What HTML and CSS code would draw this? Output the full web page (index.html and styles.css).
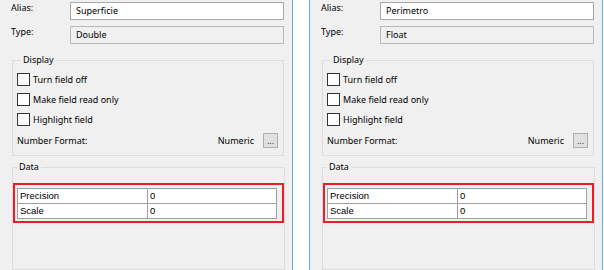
FILE: index.html
```html
<!DOCTYPE html>
<html lang="en">
<head>
  <meta charset="UTF-8">
  <meta name="viewport" content="width=device-width, initial-scale=1.0">
  <title>Field Properties</title>
  <link rel="stylesheet" href="styles.css">
</head>
<body>
  <div class="panels">
    <div class="panel">
      <div class="field-row">
        <span class="field-label">Alias:</span>
        <div class="field-input">Superficie</div>
      </div>
      <div class="field-row">
        <span class="field-label">Type:</span>
        <div class="field-input readonly">Double</div>
      </div>
      <fieldset class="group display-group">
        <legend>Display</legend>
        <label class="check-row"><span class="check-box"></span>Turn field off</label>
        <label class="check-row"><span class="check-box"></span>Make field read only</label>
        <label class="check-row"><span class="check-box"></span>Highlight field</label>
        <div class="format-row">
          <span class="format-label">Number Format:</span>
          <span class="format-value">Numeric</span>
          <button class="dots-btn">...</button>
        </div>
      </fieldset>
      <fieldset class="group data-group">
        <legend>Data</legend>
        <div class="highlight">
          <table class="data-table">
            <tr><td class="key">Precision</td><td>0</td></tr>
            <tr><td class="key">Scale</td><td>0</td></tr>
          </table>
        </div>
      </fieldset>
    </div>

    <div class="panel">
      <div class="field-row">
        <span class="field-label">Alias:</span>
        <div class="field-input">Perimetro</div>
      </div>
      <div class="field-row">
        <span class="field-label">Type:</span>
        <div class="field-input readonly">Float</div>
      </div>
      <fieldset class="group display-group">
        <legend>Display</legend>
        <label class="check-row"><span class="check-box"></span>Turn field off</label>
        <label class="check-row"><span class="check-box"></span>Make field read only</label>
        <label class="check-row"><span class="check-box"></span>Highlight field</label>
        <div class="format-row">
          <span class="format-label">Number Format:</span>
          <span class="format-value">Numeric</span>
          <button class="dots-btn">...</button>
        </div>
      </fieldset>
      <fieldset class="group data-group">
        <legend>Data</legend>
        <div class="highlight">
          <table class="data-table">
            <tr><td class="key">Precision</td><td>0</td></tr>
            <tr><td class="key">Scale</td><td>0</td></tr>
          </table>
        </div>
      </fieldset>
    </div>
  </div>
</body>
</html>
```

FILE: styles.css
```css
/* General */
body {
  margin: 0;
  background: #ffffff;
  font-family: "Noto Sans", "Liberation Sans", sans-serif;
  font-size: 9px;
  color: #000;
  overflow: hidden;
}

.panels {
  display: flex;
  gap: 16px;
  margin-left: -1px;
  height: 270px;
}

/* Window panel */
.panel {
  box-sizing: border-box;
  width: 294px;
  height: 270px;
  background: #f0f0f0;
  border-left: 1px solid #5eade9;
  border-right: 1px solid #5eade9;
  padding: 2px 8px 0 11px;
  display: flex;
  flex-direction: column;
  overflow: hidden;
}

/* Alias / Type rows */
.field-row {
  display: grid;
  grid-template-columns: 59px 1fr;
  height: 18px;
  margin-bottom: 6px;
}

.field-label {
  line-height: 12px;
}

.field-input {
  box-sizing: border-box;
  height: 18px;
  border: 1px solid #a9a9a9;
  background: #fff;
  padding-left: 5px;
  line-height: 16px;
}

.field-input.readonly {
  background: #f0f0f0;
  border-color: #b9b9b9;
}

/* Group boxes */
.group {
  border: 1px solid #dcdcdc;
  margin: 4px 0 0 1px;
  padding: 0 5px 0 4px;
  display: flex;
  flex-direction: column;
  gap: 7px;
}

.group legend {
  margin-left: 4px;
  padding: 0 2px;
  line-height: 12px;
}

.display-group {
  padding-top: 7px;
  padding-bottom: 7px;
}

.check-row {
  display: flex;
  align-items: center;
  height: 13px;
  gap: 3px;
}

.check-box {
  box-sizing: border-box;
  width: 13px;
  height: 13px;
  border: 1px solid #333;
  background: #fff;
}

.format-row {
  display: flex;
  align-items: center;
  height: 15px;
}

.format-label {
  flex: 1;
}

.format-value {
  margin-right: 9px;
}

.dots-btn {
  box-sizing: border-box;
  width: 15px;
  height: 15px;
  padding: 0;
  border: 1px solid #adadad;
  background: #e1e1e1;
  font-family: inherit;
  font-size: 9px;
  line-height: 14px;
  color: #333;
}

/* Data group */
.data-group {
  margin-top: 5px;
  padding: 10px 0 0 0;
  flex: 1;
}

.highlight {
  border: 2px solid #ee1c24;
  padding: 3px 5px 2px 2px;
}

.data-table {
  border-collapse: collapse;
  width: 260px;
  font-family: "Liberation Sans", Arial, sans-serif;
  font-size: 9.5px;
  background: #fff;
}

.data-table td {
  border: 1px solid #a0a0a0;
  height: 14px;
  padding: 0 2px;
  line-height: 14px;
}

.data-table td.key {
  width: 125px;
}
```
